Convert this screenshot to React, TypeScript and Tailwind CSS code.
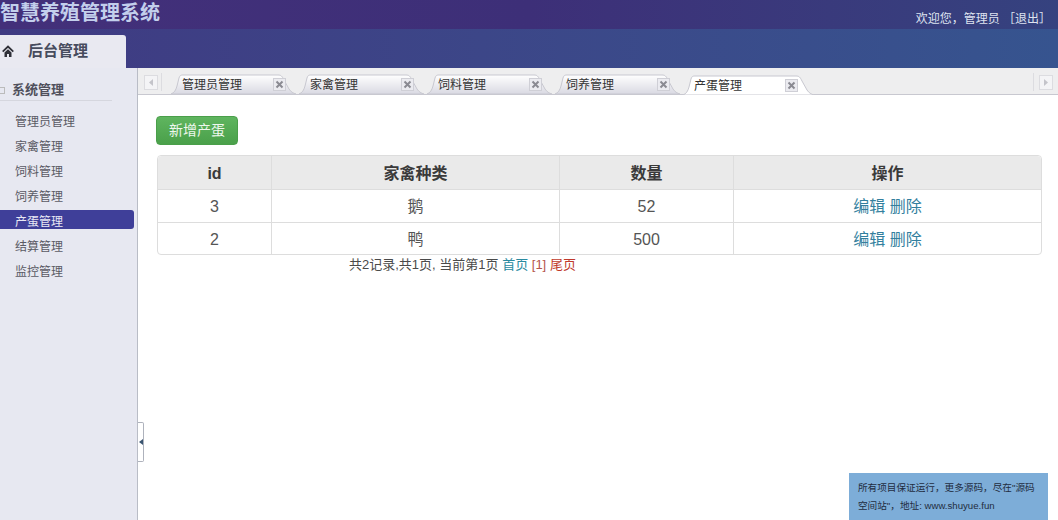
const font = "font-['Liberation_Sans','Noto_Sans_CJK_SC',sans-serif]";

const menuItems = ["管理员管理", "家禽管理", "饲料管理", "饲养管理", "产蛋管理", "结算管理", "监控管理"];
const tabs = ["管理员管理", "家禽管理", "饲料管理", "饲养管理", "产蛋管理"];

const rows = [
    { id: 3, kind: "鹅", count: 52 },
    { id: 2, kind: "鸭", count: 500 },
];

const HomeIcon = () => (
    <svg width="12" height="13" viewBox="0 0 12 13" className="shrink-0 mr-[14px]">
        <path d="M0.7 6.6 L6 1.6 L11.3 6.6" fill="none" stroke="#2f3038" strokeWidth="1.8" />
        <path d="M2.5 7.4 L6 4.2 L9.5 7.4 V12 H7 V9 H5 V12 H2.5 Z" fill="#2f3038" />
    </svg>
);

const CloseBox = () => (
    <svg width="13" height="13" viewBox="0 0 13 13" className="shrink-0">
        <rect x="0.5" y="0.5" width="12" height="12" fill="#ebebf0" stroke="#cfcfd6" />
        <path d="M3.5 3.5 L9.5 9.5 M9.5 3.5 L3.5 9.5" stroke="#8a8a92" strokeWidth="2" />
    </svg>
);

const Tab = ({ title, active }: { title: string; active: boolean }) => {
    const width = active ? 131 : 125;
    const gradientId = active ? "tab-active" : "tab-idle";
    return (
        <div className={`relative h-[20px] shrink-0 ${active ? "w-[131px] -mb-px z-10" : "w-[125px] mr-[3px]"}`}>
            <svg width={width} height="20" viewBox={`0 0 ${width} 20`} className="absolute inset-0">
                <defs>
                    <linearGradient id={gradientId} x1="0" y1="0" x2="0" y2="1">
                        <stop offset="0" stopColor="#ffffff" />
                        <stop offset="1" stopColor={active ? "#ffffff" : "#d9d9e2"} />
                    </linearGradient>
                </defs>
                <path
                    d={`M0 20 C3 19 5 16 6 12 L8 4 C9 1 10 1 13 1 L${width - 18} 1 C${width - 15} 1 ${width - 14} 2 ${width - 12} 6 L${width - 7} 15 C${width - 5} 18 ${width - 3} 19 ${width} 20 Z`}
                    fill={`url(#${gradientId})`}
                    stroke="#c8c8d0"
                />
            </svg>
            <div className="relative flex h-full items-center pl-[11px]">
                <span className="text-[12px] leading-none text-[#333] w-[91px] whitespace-nowrap pt-[2px]">{title}</span>
                <CloseBox />
            </div>
        </div>
    );
};

const Arrow = ({ dir }: { dir: "left" | "right" }) => (
    <svg width="14" height="15" viewBox="0 0 14 15" className="shrink-0">
        <rect x="0.5" y="0.5" width="13" height="14" fill="#f4f4f6" stroke="#dcdce0" />
        <path d={dir === "left" ? "M9 4 L5 7.5 L9 11 Z" : "M5 4 L9 7.5 L5 11 Z"} fill="#c4c4ca" />
    </svg>
);

const Sidebar = () => (
    <aside className="w-[138px] shrink-0 bg-[#e7e8f1] border-r border-[#b9bcc6]">
        <div className="h-[33px] pt-[11px] flex items-center border-b border-[#d5d6de] w-[112px] text-[13px] font-bold text-[#50505c]">
            <span className="w-[5px] h-[7px] border border-l-0 border-[#bbb] mr-[7px] mt-px" />
            系统管理
        </div>
        <ul className="mt-[9px]">
            {menuItems.map((item) => (
                <li
                    key={item}
                    className={`h-[19px] mb-[6px] w-[134px] pl-[15px] text-[12px] leading-[25px] rounded-r-[3px] ${
                        item === "产蛋管理" ? "bg-[#3f3f99] text-[#e8e8f4]" : "text-[#5a5a64]"
                    }`}
                >
                    {item}
                </li>
            ))}
        </ul>
    </aside>
);

export default function App() {
    const th = "font-bold pt-[2px] border-l border-[#ddd] first:border-l-0";
    const td = "border-l border-t border-[#ddd] first:border-l-0";

    return (
        <div className={`${font} relative w-[1058px] h-[520px] overflow-hidden bg-white flex flex-col`}>
            <header className="h-[29px] shrink-0 flex items-center justify-between bg-linear-to-r from-[#43307a] via-[#3d2f78] to-[#35427f] pr-[7px]">
                <h1 className="text-[20px] font-bold text-[#c3cfec] leading-none -mt-[4px]">智慧养殖管理系统</h1>
                <div className="text-[12px] text-[#dfe3f0] mt-[9px]">欢迎您，管理员 ［退出］</div>
            </header>

            <div className="h-[39px] shrink-0 flex items-end bg-linear-to-r from-[#3f3a82] to-[#36548f]">
                <div className="w-[126px] h-[33px] bg-[#e9e9f1] rounded-tr-[3px] flex items-center pl-[2px] text-[15px] font-bold text-[#474c5e]">
                    <HomeIcon />
                    后台管理
                </div>
            </div>

            <div className="flex flex-1 min-h-0">
                <Sidebar />

                <main className="flex-1 flex flex-col min-w-0 relative">
                    <div className="h-[27px] shrink-0 bg-[#eeeeef] border-b border-[#c8c8d0] flex items-end pb-0 pl-[6px] pr-[5px]">
                        <div className="flex items-center h-[20px] self-end mb-[2px]">
                            <Arrow dir="left" />
                            <span className="w-px h-[18px] bg-[#dcdce0] mx-[3px]" />
                        </div>
                        <div className="flex items-end ml-[6px] flex-1">
                            {tabs.map((t) => (
                                <Tab key={t} title={t} active={t === "产蛋管理"} />
                            ))}
                        </div>
                        <div className="flex items-center h-[20px] self-end mb-[2px]">
                            <span className="w-px h-[18px] bg-[#dcdce0] mr-[5px]" />
                            <Arrow dir="right" />
                        </div>
                    </div>

                    <div className="pl-[18px] pt-[21px]">
                        <button className="w-[82px] h-[29px] rounded-[4px] border border-[#4a9f4a] bg-linear-to-b from-[#5fb55f] to-[#4aa04a] text-[14px] text-[#eef7ee] block">
                            新增产蛋
                        </button>

                        <table className="mt-[10px] ml-px w-[885px] table-fixed border-separate border-spacing-0 border border-[#ddd] rounded-[4px] text-center text-[16px] text-[#555]">
                            <colgroup>
                                <col className="w-[113px]" />
                                <col className="w-[288px]" />
                                <col className="w-[174px]" />
                                <col />
                            </colgroup>
                            <thead>
                                <tr className="h-[33px] bg-[#eaeaea] text-[#3a3a3a]">
                                    <th className={`${th} rounded-tl-[4px]`}>id</th>
                                    <th className={th}>家禽种类</th>
                                    <th className={th}>数量</th>
                                    <th className={`${th} rounded-tr-[4px]`}>操作</th>
                                </tr>
                            </thead>
                            <tbody>
                                {rows.map((r, i) => (
                                    <tr key={r.id} className={i === 0 ? "h-[33px] [&>td]:pt-px" : "h-[32px] [&>td]:pt-[2px]"}>
                                        <td className={td}>{r.id}</td>
                                        <td className={td}>{r.kind}</td>
                                        <td className={td}>{r.count}</td>
                                        <td className={`${td} text-[#337f9e]`}>编辑 删除</td>
                                    </tr>
                                ))}
                            </tbody>
                        </table>

                        <p className="ml-[193px] mt-px text-[13px] leading-[18px] text-[#4a4a4a] whitespace-nowrap">
                            共2记录,共1页, 当前第1页 <span className="text-[#2a8aa0]">首页</span>{" "}
                            <span className="text-[#b5544a]">[1]</span> <span className="text-[#c0392b]">尾页</span>
                        </p>
                    </div>

                    {/* collapse handle sits over the content edge */}
                    <div className="absolute left-0 top-[354px] w-[6px] h-[40px] bg-white border border-l-0 border-[#aeb2bc] rounded-r-[2px] flex items-center">
                        <span className="w-0 h-0 border-y-[3px] border-y-transparent border-r-[4px] border-r-[#3a5470] ml-px" />
                    </div>
                </main>
            </div>

            <div className="absolute left-[849px] top-[473px] w-[199px] h-[47px] bg-[#7dadd8] px-[9px] pt-[6px] text-[9.65px] leading-[18px] text-[#1f2c40]">
                所有项目保证运行，更多源码，尽在"源码空间站"，地址: www.shuyue.fun
            </div>
        </div>
    );
}
